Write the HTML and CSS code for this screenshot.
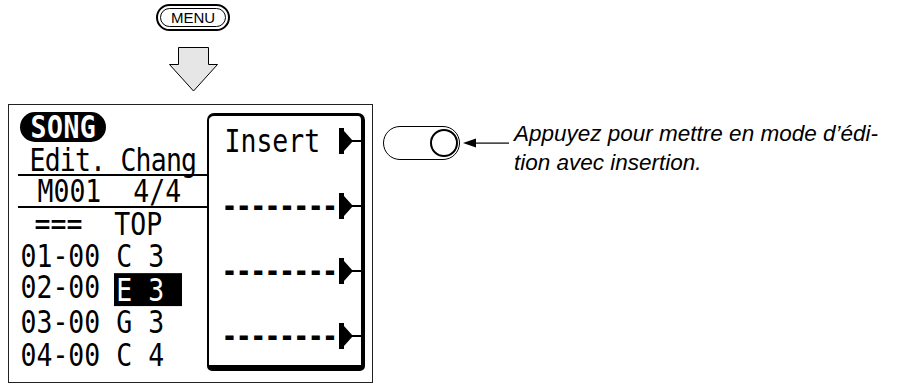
FILE: index.html
```html
<!DOCTYPE html>
<html lang="fr">
<head>
    <meta charset="UTF-8">
    <title>Song Edit - Insert</title>
    <link rel="stylesheet" href="styles.css">
</head>
<body>

    <!-- MENU key and arrow -->
    <div class="head">
        <div class="menu"><span>MENU</span></div>
        <svg class="down" width="49" height="45" viewBox="0 0 49 45">
            <polygon points="9.5,0.5 39.5,0.5 39.5,17.5 48.5,17.5 24.5,44 0.5,17.5 9.5,17.5" fill="#e6e6e6" stroke="#000" stroke-width="1"/>
        </svg>
    </div>

    <div class="main">
        <!-- LCD screen -->
        <div class="lcd">
            <div class="lcd-left">
                <div class="row song-row"><span class="song"><span class="px">SONG</span></span></div>
                <div class="row edit-row"><span class="px">Edit. Chang</span></div>
                <div class="row meas-row"><span class="px">M001  4/4</span></div>
                <div class="row top-row"><span class="px">===  TOP</span></div>
                <div class="row ev-row"><span class="px">01-00 C 3</span></div>
                <div class="row ev-row"><span class="px">02-00 <span class="hl">E 3</span></span></div>
                <div class="row ev-row"><span class="px">03-00 G 3</span></div>
                <div class="row ev-row"><span class="px">04-00 C 4</span></div>
            </div>

            <div class="panel">
                <div class="opt"><span class="px label">Insert</span>
                    <svg class="tri" width="22" height="26" viewBox="0 0 22 26"><rect x="0" y="0" width="5" height="26"/><polygon points="5,3 14,13 5,23"/><rect x="13" y="12" width="9" height="2"/></svg>
                </div>
                <div class="opt"><span class="px dash">--------</span>
                    <svg class="tri" width="22" height="26" viewBox="0 0 22 26"><rect x="0" y="0" width="5" height="26"/><polygon points="5,3 14,13 5,23"/><rect x="13" y="12" width="9" height="2"/></svg>
                </div>
                <div class="opt"><span class="px dash">--------</span>
                    <svg class="tri" width="22" height="26" viewBox="0 0 22 26"><rect x="0" y="0" width="5" height="26"/><polygon points="5,3 14,13 5,23"/><rect x="13" y="12" width="9" height="2"/></svg>
                </div>
                <div class="opt last"><span class="px dash">--------</span>
                    <svg class="tri" width="22" height="26" viewBox="0 0 22 26"><rect x="0" y="0" width="5" height="26"/><polygon points="5,3 14,13 5,23"/><rect x="13" y="12" width="9" height="2"/></svg>
                </div>
            </div>
        </div>

        <!-- Button callout -->
        <div class="callout">
            <div class="toggle"><span class="knob"></span></div>
            <svg class="pointer" width="46" height="12" viewBox="0 0 46 12">
                <polygon points="0,6 13,1.5 13,10.5"/>
                <rect x="12" y="5.5" width="34" height="1.2"/>
            </svg>
            <p class="note">Appuyez pour mettre en mode d’édi-<br>tion avec insertion.</p>
        </div>
    </div>

</body>
</html>
```

FILE: styles.css
```css
* {
    margin: 0;
    padding: 0;
    box-sizing: border-box;
}

body {
    font-family: "Liberation Sans", Arial, sans-serif;
    background-color: #fff;
    color: #000;
    width: 907px;
    height: 384px;
    overflow: hidden;
}

/* MENU key */
.head {
    width: 386px;
    padding-top: 4px;
    display: flex;
    flex-direction: column;
    align-items: center;
}

.menu {
    border: 2px solid #000;
    border-radius: 15px;
    padding: 2px;
}

.menu span {
    display: block;
    width: 66px;
    height: 19px;
    line-height: 18px;
    border: 1px solid #000;
    border-radius: 12px;
    text-align: center;
    font-size: 15px;
}

.down {
    display: block;
    margin-top: 16px;
}

.main {
    display: flex;
    margin-top: 12px;
}

/* LCD */
.lcd {
    margin-left: 8px;
    width: 365px;
    height: 279px;
    border: 1.5px solid #222;
    display: flex;
}

.px {
    display: inline-block;
    font-family: "DejaVu Sans Mono", monospace;
    font-size: 26.5px;
    line-height: 24px;
    white-space: pre;
    transform: scaleY(1.22);
}

.lcd-left {
    width: 197.5px;
    padding-top: 7px;
    padding-left: 8.5px;
}

.row {
    display: flex;
    align-items: center;
    white-space: pre;
}

.song-row {
    height: 33px;
    padding-left: 2px;
    align-items: flex-start;
}

.song {
    display: flex;
    align-items: center;
    height: 30px;
    background-color: #000;
    border-radius: 15px;
    padding: 0 10px 0 11px;
}

.song .px {
    color: #fff;
    font-weight: bold;
    letter-spacing: 0.5px;
}

.edit-row {
    height: 31px;
    padding-left: 12px;
    border-bottom: 2px solid #000;
}

.edit-row .px {
    letter-spacing: -0.8px;
}

.meas-row {
    height: 32px;
    padding-left: 20px;
    border-bottom: 2px solid #000;
}

.top-row {
    height: 31px;
    padding-left: 17px;
}

.ev-row {
    height: 33px;
    padding-left: 3px;
}

.hl {
    display: inline-block;
    line-height: 27px;
    vertical-align: -3px;
    background-color: #000;
    color: #fff;
    padding: 0 18px 0 2px;
    margin-left: -2px;
}

/* Soft-key panel */
.panel {
    width: 158px;
    height: 258px;
    margin-top: 7.5px;
    border-style: solid;
    border-color: #000;
    border-width: 3px 4px 6px 2px;
    border-radius: 7px 7px 5px 5px;
}

.opt {
    height: 65px;
    padding: 0 0 15px 16px;
    display: flex;
    align-items: center;
}

.opt.last {
    height: 54px;
    padding-bottom: 4px;
}

.opt .dash {
    margin-left: -3px;
    letter-spacing: -1.6px;
    font-weight: bold;
}

.tri {
    display: block;
    margin-left: auto;
}

/* Callout */
.callout {
    display: flex;
    align-items: flex-start;
    margin-left: 10px;
    margin-top: 22px;
}

.toggle {
    width: 77px;
    height: 34px;
    border: 1px solid #000;
    border-radius: 17px;
    display: flex;
    justify-content: flex-end;
    align-items: center;
    padding-right: 1px;
}

.knob {
    width: 28px;
    height: 28px;
    border: 2px solid #000;
    border-radius: 50%;
}

.pointer {
    display: block;
    margin: 11px 0 0 3px;
}

.note {
    margin: -7px 0 0 5px;
    font-style: italic;
    font-size: 22.5px;
    line-height: 29px;
    white-space: nowrap;
}
```
